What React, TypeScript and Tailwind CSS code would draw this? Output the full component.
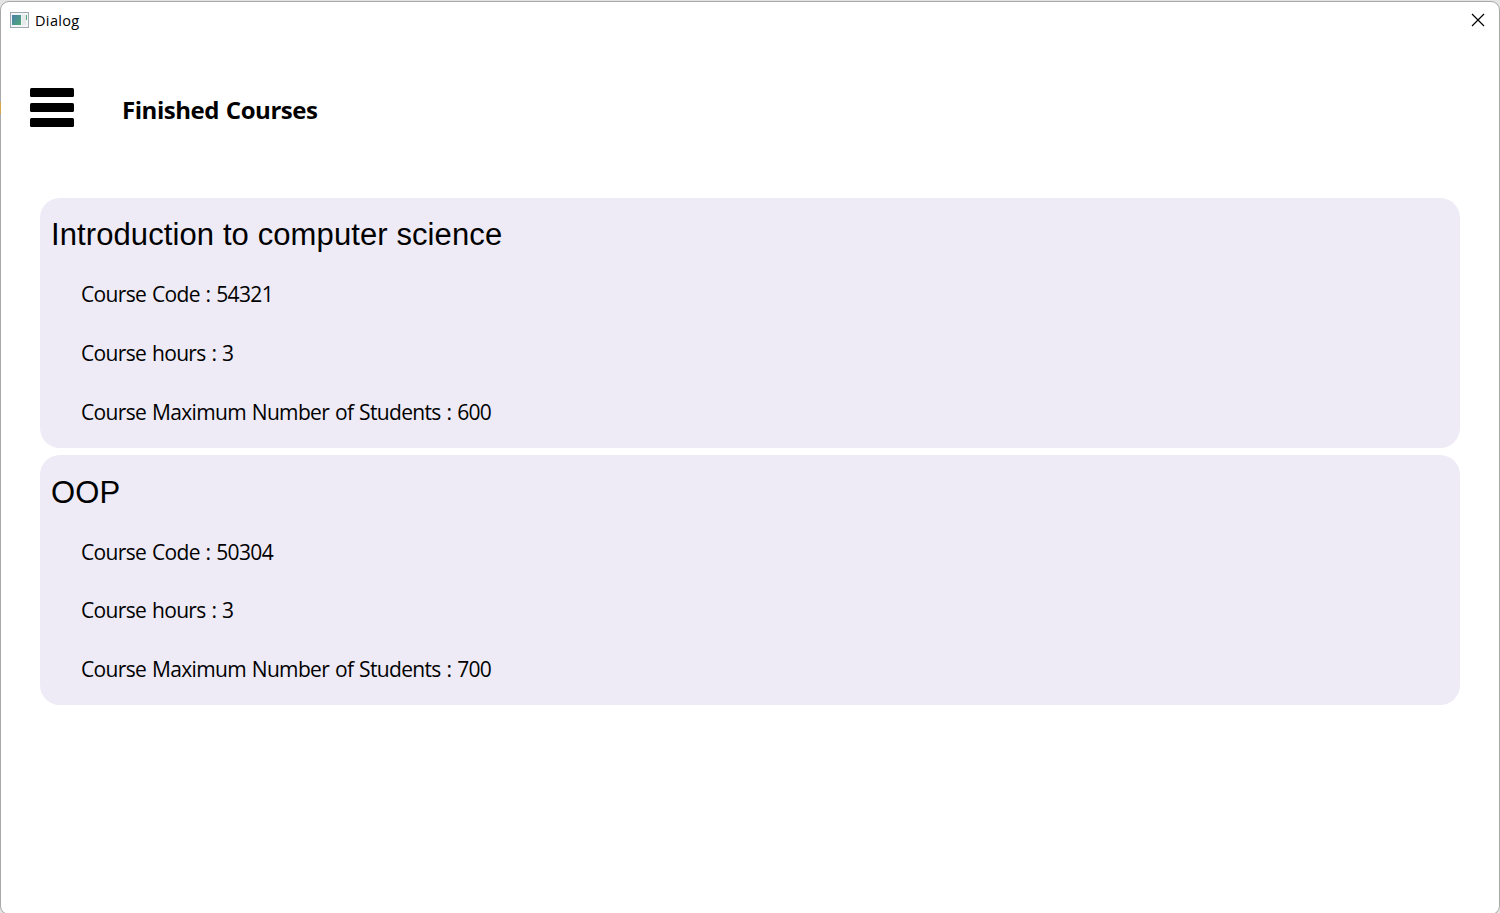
const courses = [
  { name: "Introduction to computer science", code: "54321", hours: 3, max: 600 },
  { name: "OOP", code: "50304", hours: 3, max: 700 },
];

export default function App() {
  return (
    <div className="relative flex h-[913px] w-[1500px] overflow-hidden bg-[#e4e4e4] font-['Open_Sans',sans-serif] text-black">
      <div className="mt-px flex h-[914px] w-full flex-col rounded-[9px] border border-[#a8a8a8] bg-white">
        <header className="flex h-[36px] items-center pl-[9px] pr-[14px]">
          <svg width="19" height="16" viewBox="0 0 19 16">
            <defs>
              <linearGradient id="pane" x1="0" y1="0" x2="1" y2="1">
                <stop offset="0" stopColor="#4a7fae" />
                <stop offset="1" stopColor="#4fa873" />
              </linearGradient>
            </defs>
            <rect x="0.5" y="0.5" width="18" height="15" fill="#f4f5f7" stroke="#a3a9b3" />
            <rect x="2" y="3" width="9" height="10" fill="url(#pane)" />
            <rect x="12" y="3" width="4" height="10" fill="#e6e9e9" />
            <rect x="16" y="3" width="1" height="5" fill="#55a780" />
          </svg>
          <span className="ml-[6px] pt-[2px] text-[14.5px] tracking-[0.35px]">Dialog</span>
          <svg className="ml-auto" width="14" height="14" viewBox="0 0 14 14" stroke="#000" strokeWidth="1.2">
            <path d="M1 1L13 13M13 1L1 13" />
          </svg>
        </header>
        <div className="mt-[45px] flex h-[48px] items-center pl-[29px]">
          <svg width="44" height="39" viewBox="0 0 44 39">
            <rect width="44" height="9" rx="1.5" />
            <rect y="15" width="44" height="9" rx="1.5" />
            <rect y="30" width="44" height="9" rx="1.5" />
          </svg>
          <h1 className="ml-[48px] pt-[5px] text-[24px] font-bold tracking-[-0.45px] [word-spacing:1px]">Finished Courses</h1>
        </div>
        <main className="mt-[67px] flex flex-col gap-[7.4px] px-[39px]">
          {courses.map((c) => (
            <section key={c.name} className="flex h-[250px] shrink-0 flex-col rounded-[20px] bg-[#eeebf6] pl-[11px] pt-[16.2px]">
              <h2 className="h-[51px] font-['Liberation_Sans',sans-serif] text-[31px] leading-[42px] tracking-[0.1px]">{c.name}</h2>
              <div className="flex flex-col pl-[30px] text-[21px] leading-[58.8px] tracking-[-0.66px] [word-spacing:1px]">
                <p>Course Code : {c.code}</p>
                <p>Course hours : {c.hours}</p>
                <p>Course Maximum Number of Students : {c.max}</p>
              </div>
            </section>
          ))}
        </main>
      </div>
      <div className="absolute left-0 top-[102px] h-[12px] w-px bg-[#d6aa4a]" />
    </div>
  );
}
